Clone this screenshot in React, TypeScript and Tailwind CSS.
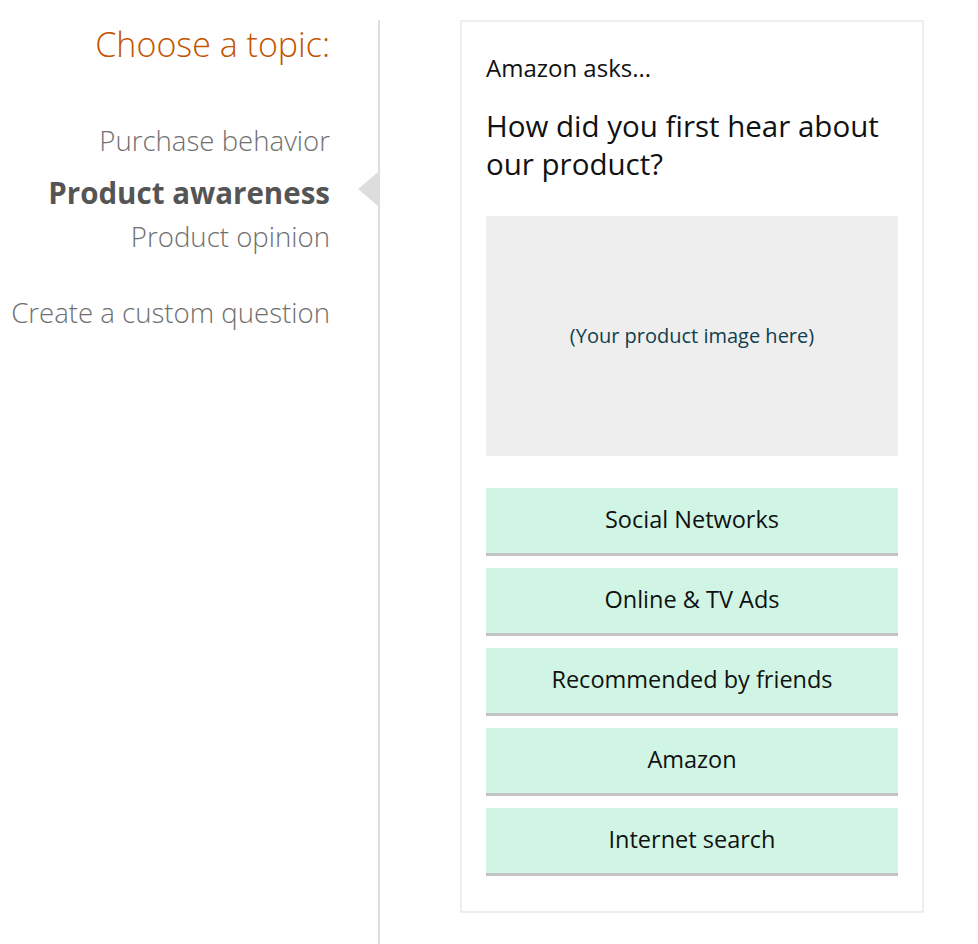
const topics = [
  { label: "Purchase behavior", active: false, gap: "mt-[52px]" },
  { label: "Product awareness", active: true, gap: "mt-[13px]" },
  { label: "Product opinion", active: false, gap: "mt-[3px]" },
  { label: "Create a custom question", active: false, gap: "mt-[36px]" },
];

const answers = [
  "Social Networks",
  "Online & TV Ads",
  "Recommended by friends",
  "Amazon",
  "Internet search",
];

export default function App() {
  return (
    <div className="flex min-h-[944px] bg-white pt-[20px] font-['Open_Sans',sans-serif]">
      {/* topic list */}
      <div className="w-[330px] shrink-0 text-right">
        <h2 className="text-[34px] leading-[48px] font-light text-[#c45500]">
          Choose a topic:
        </h2>
        {topics.map((t) => (
          <div
            key={t.label}
            className={
              t.gap +
              " leading-[40px] " +
              (t.active
                ? "text-[29.5px] font-bold text-[#555555]"
                : "text-[27.6px] font-light text-[#6f6f6f]")
            }
          >
            {t.label}
          </div>
        ))}
      </div>

      {/* preview */}
      <div className="relative ml-[48px] flex-1 border-l-2 border-[#dddddd] pl-[80px]">
        <span className="absolute left-[-22px] top-[152px] h-0 w-0 border-y-[17px] border-r-[20px] border-y-transparent border-r-[#dddddd]" />
        <div className="w-[464px] border-2 border-[#eeeeee] px-[24px] pt-[31px] pb-[35px]">
          <p className="text-[24px] leading-[30px] text-[#111111]">Amazon asks...</p>
          <h1 className="mt-[24px] text-[29.5px] leading-[38px] text-[#111111]">
            How did you first hear about our product?
          </h1>
          <div className="mt-[33px] flex h-[240px] items-center justify-center bg-[#eeeeee] text-[20px] text-[#0e3f4d]">
            (Your product image here)
          </div>
          <div className="mt-[32px] flex flex-col gap-[12px]">
            {answers.map((a) => (
              <button
                key={a}
                className="flex h-[68px] items-center justify-center border-b-[3px] border-[#c4c4c4] bg-[#d0f5e4] pb-[2px] text-[23.5px] text-[#111111]"
              >
                {a}
              </button>
            ))}
          </div>
        </div>
      </div>
    </div>
  );
}
